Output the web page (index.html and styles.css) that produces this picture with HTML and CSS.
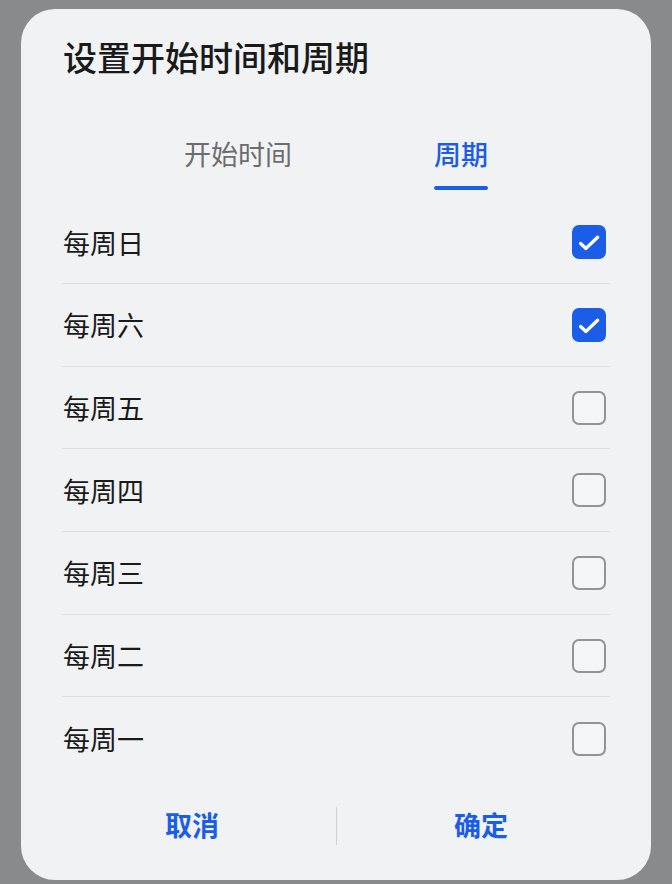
FILE: index.html
```html
<!DOCTYPE html>
<html lang="zh-CN">
<head>
<meta charset="utf-8">
<title>设置开始时间和周期</title>
<link rel="stylesheet" href="styles.css">
</head>
<body>
<div class="dialog">
  <h1 class="title">设置开始时间和周期</h1>
  <div class="tabs">
    <div class="tab">开始时间</div>
    <div class="tab active">周期<span class="bar"></span></div>
  </div>
  <ul class="list">
    <li class="row"><span class="label">每周日</span><span class="box checked"><svg viewBox="0 0 34 34"><polyline points="8.6,18.6 14,23.4 25.6,12.2"/></svg></span></li>
    <li class="row"><span class="label">每周六</span><span class="box checked"><svg viewBox="0 0 34 34"><polyline points="8.6,18.6 14,23.4 25.6,12.2"/></svg></span></li>
    <li class="row"><span class="label">每周五</span><span class="box"></span></li>
    <li class="row"><span class="label">每周四</span><span class="box"></span></li>
    <li class="row"><span class="label">每周三</span><span class="box"></span></li>
    <li class="row"><span class="label">每周二</span><span class="box"></span></li>
    <li class="row"><span class="label">每周一</span><span class="box"></span></li>
  </ul>
  <div class="footer">
    <button class="btn">取消</button>
    <span class="divider"></span>
    <button class="btn">确定</button>
  </div>
</div>
</body>
</html>
```
FILE: styles.css
```css
* { box-sizing: border-box; }
html, body { margin: 0; padding: 0; }
body {
  background: #898a8c;
  font-family: "Noto Sans CJK SC", "Noto Sans", sans-serif;
  width: 672px;
  height: 884px;
  overflow: hidden;
  padding-top: 9px;
}
.dialog {
  margin-left: 21px;
  width: 630px;
  height: 871px;
  background: #f1f2f4;
  border-radius: 34px;
  padding: 24px 41px 0 41px;
  display: flex;
  flex-direction: column;
}
.title {
  margin: 0;
  font-size: 34px;
  line-height: 48px;
  font-weight: 500;
  color: #1a1a1a;
  padding-left: 1px;
}
.tabs {
  display: flex;
  justify-content: center;
  gap: 142px;
  margin-top: 53px;
  height: 55px;
}
.tab {
  position: relative;
  font-size: 27px;
  line-height: 40px;
  height: 40px;
  color: #6b6c6e;
}
.tab.active {
  color: #1b5de6;
  font-weight: 500;
}
.tab .bar {
  position: absolute;
  left: 0;
  right: 0;
  top: 52px;
  height: 3.5px;
  border-radius: 2px;
  background: #1b5de6;
}
.list {
  list-style: none;
  margin: 12.4px 0 0 0;
  padding: 0;
}
.row {
  height: 82.67px;
  display: flex;
  align-items: center;
  justify-content: space-between;
  border-bottom: 1px solid #dddee0;
}
.row:last-child { border-bottom: none; }
.label {
  font-size: 27px;
  color: #1a1a1a;
  padding-left: 1px;
}
.box {
  width: 34px;
  height: 34px;
  margin-right: 4px;
  border: 2px solid #939395;
  border-radius: 7px;
  background: #f4f5f7;
  display: flex;
}
.box.checked {
  border: none;
  background: #1b5de6;
}
.box svg {
  width: 34px;
  height: 34px;
}
.box polyline {
  fill: none;
  stroke: #ffffff;
  stroke-width: 3.4;
  stroke-linecap: round;
  stroke-linejoin: round;
}
.footer {
  height: 90px;
  margin: 0 -15px 0 -14px;
  display: flex;
  align-items: center;
}
.btn {
  flex: 1;
  border: none;
  background: none;
  font-family: inherit;
  font-size: 27px;
  font-weight: 700;
  color: #1b5de6;
  padding: 0;
  line-height: 40px;
}
.divider {
  width: 1px;
  height: 38px;
  background: #cfd0d2;
  margin-top: 3px;
}
```
